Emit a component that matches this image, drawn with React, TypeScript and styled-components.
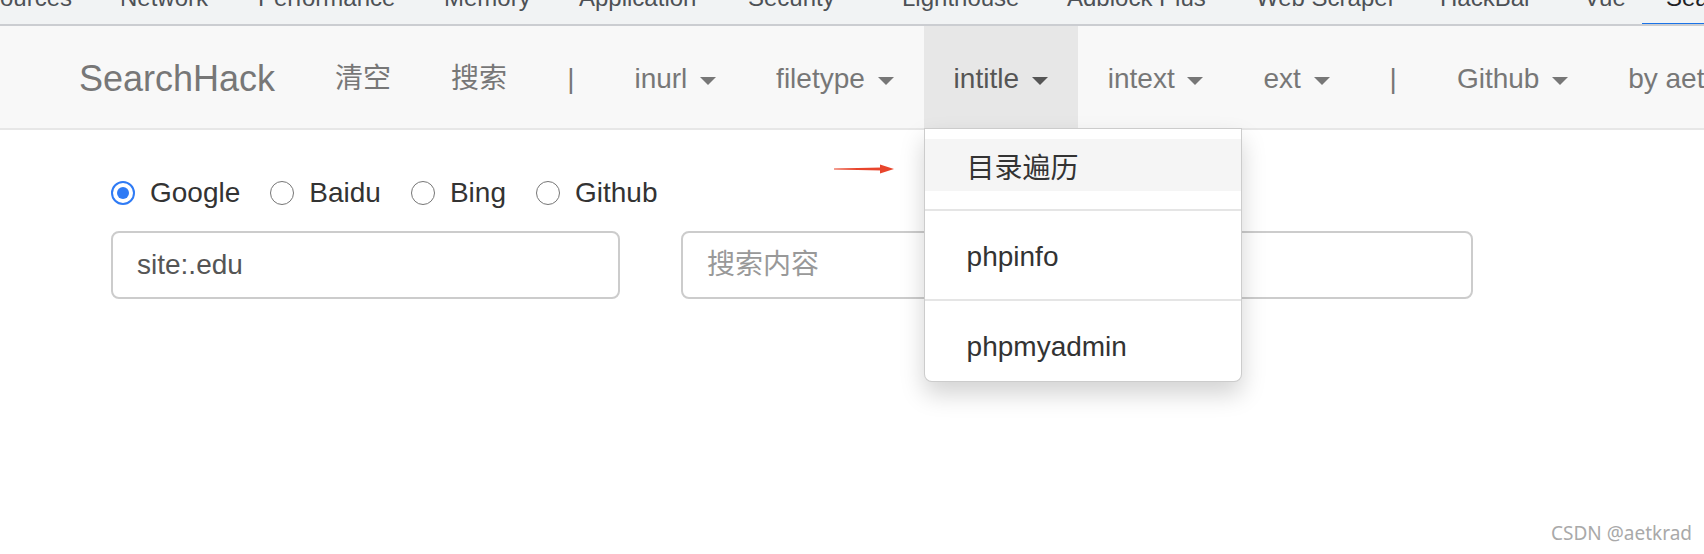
import React from "react";
import styled, { createGlobalStyle } from "styled-components";

const Global = createGlobalStyle`
  html, body { margin: 0; padding: 0; overflow: hidden; background: #fff; }
  body { font-family: "Liberation Sans", Arial, "Noto Sans CJK SC", sans-serif; }
  * { box-sizing: border-box; }
`;

const Page = styled.div`
  position: relative;
  width: 1704px;
  height: 554px;
  overflow: hidden;
  background: #fff;
`;

const TabStrip = styled.div`
  height: 26px;
  background: #f1f3f4;
  border-bottom: 2px solid #cbcdd1;
  overflow: hidden;
`;

const TabRow = styled.div`
  display: flex;
  margin-top: -14px;
  margin-left: -40px;
`;

const Tab = styled.div<{ $w: number; $active?: boolean }>`
  position: relative;
  flex: 0 0 ${(p) => p.$w}px;
  padding-left: 24px;
  height: 38px;
  font-size: 24px;
  line-height: 24px;
  white-space: nowrap;
  color: ${(p) => (p.$active ? "#202124" : "#4d5156")};
  &::after {
    content: "";
    display: ${(p) => (p.$active ? "block" : "none")};
    position: absolute;
    left: 0;
    right: 0;
    top: 37px;
    height: 3px;
    background: #1a73e8;
  }
`;

const NavBar = styled.nav`
  display: flex;
  align-items: stretch;
  height: 104px;
  padding-left: 49px;
  background: #f8f8f8;
  border-bottom: 2px solid #e7e7e7;
  white-space: nowrap;
`;

const Brand = styled.div`
  flex-shrink: 0;
  padding: 33px 30px 29px;
  font-size: 36px;
  line-height: 40px;
  color: #777;
`;

const NavItem = styled.div<{ $open?: boolean }>`
  position: relative;
  flex-shrink: 0;
  padding: 33px 30px 29px;
  font-size: 28px;
  line-height: 40px;
  color: ${(p) => (p.$open ? "#555" : "#777")};
  background: ${(p) => (p.$open ? "#e7e7e7" : "transparent")};
`;

const Caret = styled.span`
  display: inline-block;
  width: 0;
  height: 0;
  margin-left: 5px;
  vertical-align: middle;
  border-top: 8px solid currentColor;
  border-left: 8px solid transparent;
  border-right: 8px solid transparent;
`;

const Menu = styled.div`
  position: absolute;
  z-index: 10;
  top: 100%;
  left: 0;
  width: 318px;
  padding: 10px 0;
  background: #fff;
  border: 1px solid rgba(0, 0, 0, 0.2);
  border-radius: 0 0 8px 8px;
  box-shadow: 0 12px 24px rgba(0, 0, 0, 0.175);
`;

const MenuItem = styled.div<{ $hover?: boolean }>`
  padding: 6px 42px;
  font-size: 28px;
  line-height: 40px;
  color: #333;
  background: ${(p) => (p.$hover ? "#f5f5f5" : "transparent")};
`;

const MenuText = styled.span<{ $shift?: number }>`
  display: inline-block;
  transform: translateY(${(p) => p.$shift ?? 2}px);
`;

const Divider = styled.div`
  height: 2px;
  margin: 18px 0;
  background: #e5e5e5;
`;

const Main = styled.main`
  padding: 43px 0 0 111px;
`;

const RadioRow = styled.div`
  display: flex;
  align-items: center;
  gap: 30px;
  height: 40px;
`;

const RadioLabel = styled.label`
  display: flex;
  align-items: center;
  gap: 15px;
  font-size: 28px;
  line-height: 40px;
  color: #333;
`;

const RadioDot = styled.span<{ $checked?: boolean }>`
  display: inline-flex;
  align-items: center;
  justify-content: center;
  width: 24px;
  height: 24px;
  border-radius: 50%;
  border: ${(p) => (p.$checked ? "2.5px solid #2f7bf5" : "1.5px solid #767676")};
  background: #fff;
  &::after {
    content: "";
    display: ${(p) => (p.$checked ? "block" : "none")};
    width: 12px;
    height: 12px;
    border-radius: 50%;
    background: #2f7bf5;
  }
`;

const InputRow = styled.div`
  display: flex;
  gap: 61px;
  margin-top: 18px;
`;

const TextInput = styled.input<{ $w: number }>`
  width: ${(p) => p.$w}px;
  height: 68px;
  padding: 0 24px;
  font-family: "Liberation Sans", Arial, "Noto Sans CJK SC", sans-serif;
  font-size: 28px;
  color: #555;
  background: #fff;
  border: 2px solid #ccc;
  border-radius: 8px;
  outline: none;
  &::placeholder { color: #999; }
`;

const Arrow = styled.svg`
  position: absolute;
  left: 834px;
  top: 163px;
`;

const Watermark = styled.div`
  position: absolute;
  right: 12px;
  bottom: 8px;
  font-family: "Noto Sans", "Open Sans", sans-serif;
  font-size: 19px;
  color: #a9a9a9;
  text-shadow: 0 0 1px #fff;
`;

const tabs: [string, number][] = [
  ["Sources", 136],
  ["Network", 138],
  ["Performance", 186],
  ["Memory", 135],
  ["Application", 169],
  ["Security", 154],
  ["Lighthouse", 165],
  ["Adblock Plus", 189],
  ["Web Scraper", 184],
  ["HackBar", 144],
  ["Vue", 82],
  ["Search", 140],
];

export default function App() {
  return (
    <Page>
      <Global />
      <TabStrip>
        <TabRow>
          {tabs.map(([t, w], i) => (
            <Tab key={t} $w={w} $active={i === tabs.length - 1}>
              {t}
            </Tab>
          ))}
        </TabRow>
      </TabStrip>
      <NavBar>
        <Brand>SearchHack</Brand>
        <NavItem>清空</NavItem>
        <NavItem>搜索</NavItem>
        <NavItem>|</NavItem>
        <NavItem>
          inurl <Caret />
        </NavItem>
        <NavItem>
          filetype <Caret />
        </NavItem>
        <NavItem $open>
          intitle <Caret />
          <Menu>
            <MenuItem $hover>
              <MenuText $shift={4}>目录遍历</MenuText>
            </MenuItem>
            <Divider />
            <MenuItem>
              <MenuText>phpinfo</MenuText>
            </MenuItem>
            <Divider />
            <MenuItem>
              <MenuText>phpmyadmin</MenuText>
            </MenuItem>
          </Menu>
        </NavItem>
        <NavItem>
          intext <Caret />
        </NavItem>
        <NavItem>
          ext <Caret />
        </NavItem>
        <NavItem>|</NavItem>
        <NavItem>
          Github <Caret />
        </NavItem>
        <NavItem>by aetkrad</NavItem>
      </NavBar>
      <Main>
        <RadioRow>
          <RadioLabel>
            <RadioDot $checked />
            Google
          </RadioLabel>
          <RadioLabel>
            <RadioDot />
            Baidu
          </RadioLabel>
          <RadioLabel>
            <RadioDot />
            Bing
          </RadioLabel>
          <RadioLabel>
            <RadioDot />
            Github
          </RadioLabel>
        </RadioRow>
        <InputRow>
          <TextInput $w={509} defaultValue="site:.edu" />
          <TextInput $w={792} placeholder="搜索内容" />
        </InputRow>
      </Main>
      <Arrow width="62" height="12" viewBox="0 0 62 12">
        <path d="M0 5.4 L48 4.6 L48 7.4 L0 6.6 Z" fill="#e8452c" />
        <path d="M46 1.5 L60 6 L46 10.5 Z" fill="#e8452c" />
      </Arrow>
      <Watermark>CSDN @aetkrad</Watermark>
    </Page>
  );
}
